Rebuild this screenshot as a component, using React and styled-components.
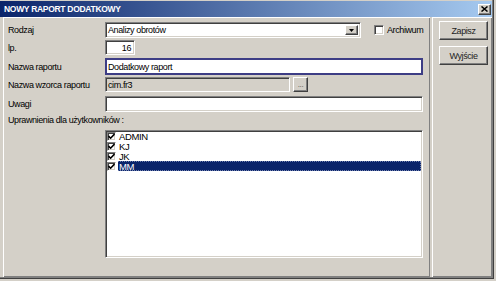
import React from "react";
import styled, { createGlobalStyle } from "styled-components";

const GlobalStyle = createGlobalStyle`
  body {
    margin: 0;
    background: #d4d0c8;
    font-family: "Liberation Sans", Arial, sans-serif;
    font-size: 9px;
    letter-spacing: -0.4px;
    color: #000;
  }
`;

const Window = styled.div`
  width: 494px;
  height: 279px;
  box-sizing: border-box;
  display: flex;
  flex-direction: column;
  background: #d4d0c8;
  border-right: 1px solid #404040;
  border-bottom: 1px solid #404040;
  box-shadow: inset -1px -1px #808080;
  padding: 1px 1px 1px 0;
`;

const TitleBar = styled.div`
  height: 16px;
  flex: none;
  display: flex;
  align-items: center;
  justify-content: space-between;
  padding: 0 1px 0 4px;
  background: linear-gradient(to right, #0a246a, #a6caf0);
`;

const Title = styled.span`
  color: #fff;
  font-weight: bold;
  font-size: 8.5px;
  letter-spacing: -0.3px;
`;

const CloseButton = styled.div`
  width: 13px;
  height: 11px;
  box-sizing: border-box;
  display: flex;
  align-items: center;
  justify-content: center;
  background: #d4d0c8;
  border: 1px solid;
  border-color: #fff #404040 #404040 #fff;
  box-shadow: inset -1px -1px #808080;
`;

const Body = styled.div`
  flex: 1;
  display: flex;
  gap: 2px;
  padding-left: 3px;
`;

const Panel = styled.div`
  box-sizing: border-box;
  box-shadow: inset 1px 1px #fff, inset -1px -1px #808080;
`;

const FormPanel = styled(Panel)`
  width: 427px;
  flex: none;
  padding: 5px 7px 0 5px;
  display: flex;
  flex-direction: column;
`;

const ButtonPanel = styled(Panel)`
  flex: 1;
  padding: 4px 4px 0 7px;
  display: flex;
  flex-direction: column;
  gap: 6px;
`;

const Row = styled.div`
  display: flex;
  align-items: stretch;
  height: ${(p) => p.$h}px;
  margin-top: ${(p) => p.$mt || 0}px;
`;

const Label = styled.span`
  width: 97px;
  flex: none;
  align-self: center;
  white-space: nowrap;
`;

const Box = styled.div`
  box-sizing: border-box;
  display: flex;
  align-items: center;
  justify-content: ${(p) => (p.$right ? "flex-end" : "flex-start")};
  width: ${(p) => (p.$w ? `${p.$w}px` : "auto")};
  flex: ${(p) => (p.$w ? "none" : "1")};
  padding: ${(p) => (p.$right ? "0 3px 0 0" : "0 0 0 2px")};
  background: ${(p) => (p.$disabled ? "#d4d0c8" : "#fff")};
  border: 1px solid;
  border-color: #808080 #fff #fff #808080;
  box-shadow: inset 1px 1px #404040, inset -1px -1px #d4d0c8;
  white-space: nowrap;
  overflow: hidden;
`;

const FocusedBox = styled(Box)`
  border: 2px solid #3d3d85;
  box-shadow: none;
  padding-left: 1px;
`;

const ComboBox = styled(Box)`
  padding: 2px 2px 2px 2px;
  justify-content: space-between;
`;

const DropButton = styled.div`
  width: 13px;
  height: 100%;
  box-sizing: border-box;
  display: flex;
  align-items: center;
  justify-content: center;
  background: #d4d0c8;
  border: 1px solid;
  border-color: #fff #404040 #404040 #fff;
  box-shadow: inset -1px -1px #808080;
`;

const CheckBox = styled.div`
  width: ${(p) => p.$size}px;
  height: ${(p) => p.$size}px;
  box-sizing: border-box;
  flex: none;
  display: flex;
  align-items: center;
  justify-content: center;
  background: #fff;
  border: 1px solid;
  border-color: #808080 #fff #fff #808080;
  box-shadow: inset 1px 1px #404040, inset -1px -1px #d4d0c8;
`;

const ArchiveWrap = styled.div`
  display: flex;
  align-items: center;
  gap: 3px;
  margin-left: 13px;
`;

const SmallButton = styled.div`
  width: 15px;
  margin-left: 3px;
  box-sizing: border-box;
  display: flex;
  align-items: flex-end;
  justify-content: center;
  padding-bottom: 2px;
  color: #555;
  font-size: 8px;
  background: #d4d0c8;
  border: 1px solid;
  border-color: #fff #404040 #404040 #fff;
  box-shadow: inset -1px -1px #808080;
`;

const SectionLabel = styled.span`
  align-self: center;
  white-space: nowrap;
`;

const ListBox = styled.div`
  flex: 1;
  box-sizing: border-box;
  background: #fff;
  border: 1px solid;
  border-color: #808080 #fff #fff #808080;
  box-shadow: inset 1px 1px #404040, inset -1px -1px #d4d0c8;
  padding: 0 1px 0 1px;
  display: flex;
  flex-direction: column;
`;

const ListItem = styled.div`
  height: 10px;
  display: flex;
  align-items: center;
  gap: 2px;
`;

const ItemText = styled.span`
  flex: 1;
  height: 100%;
  box-sizing: border-box;
  display: flex;
  align-items: center;
  padding-left: 1px;
  font-size: 9.5px;
  color: ${(p) => (p.$selected ? "#fff" : "#000")};
  background: ${(p) => (p.$selected ? "#0a246a" : "transparent")};
  border: 1px dotted ${(p) => (p.$selected ? "#6f7fae" : "transparent")};
  border-left: none;
`;

const Button = styled.div`
  height: 19px;
  width: 49px;
  box-sizing: border-box;
  display: flex;
  align-items: center;
  justify-content: center;
  color: #222;
  background: #d4d0c8;
  border: 1px solid;
  border-color: #fff #404040 #404040 #fff;
  box-shadow: inset -1px -1px #808080;
`;

const Check = () => (
  <svg width="7" height="7" viewBox="0 0 7 7">
    <path d="M0.5 3 L2.6 5.2 L6.5 1" fill="none" stroke="#000" strokeWidth="1.6" />
  </svg>
);

const users = ["ADMIN", "KJ", "JK", "MM"];

export default function App() {
  return (
    <>
      <GlobalStyle />
      <Window>
        <TitleBar>
          <Title>NOWY RAPORT DODATKOWY</Title>
          <CloseButton>
            <svg width="7" height="6" viewBox="0 0 7 6">
              <path d="M0.5 0.5 L6.5 5.5 M6.5 0.5 L0.5 5.5" stroke="#000" strokeWidth="1.5" />
            </svg>
          </CloseButton>
        </TitleBar>
        <Body>
          <FormPanel>
            <Row $h={16}>
              <Label>Rodzaj</Label>
              <ComboBox $w={256}>
                <span>Analizy obrotów</span>
                <DropButton>
                  <svg width="5" height="3" viewBox="0 0 5 3">
                    <path d="M0 0 H5 L2.5 3 Z" fill="#000" />
                  </svg>
                </DropButton>
              </ComboBox>
              <ArchiveWrap>
                <CheckBox $size={10} />
                <span>Archiwum</span>
              </ArchiveWrap>
            </Row>
            <Row $h={15} $mt={2}>
              <Label>lp.</Label>
              <Box $w={30} $right>
                16
              </Box>
            </Row>
            <Row $h={17} $mt={3}>
              <Label>Nazwa raportu</Label>
              <FocusedBox>Dodatkowy raport</FocusedBox>
            </Row>
            <Row $h={15} $mt={2}>
              <Label>Nazwa wzorca raportu</Label>
              <Box $w={185} $disabled>
                cim.fr3
              </Box>
              <SmallButton>...</SmallButton>
            </Row>
            <Row $h={16} $mt={4}>
              <Label>Uwagi</Label>
              <Box />
            </Row>
            <Row $h={12} $mt={2}>
              <SectionLabel>Uprawnienia dla użytkowników :</SectionLabel>
            </Row>
            <Row $h={128} $mt={4}>
              <Label />
              <ListBox>
                {users.map((u, i) => (
                  <ListItem key={u}>
                    <CheckBox $size={9}>
                      <Check />
                    </CheckBox>
                    <ItemText $selected={i === users.length - 1}>{u}</ItemText>
                  </ListItem>
                ))}
              </ListBox>
            </Row>
          </FormPanel>
          <ButtonPanel>
            <Button>Zapisz</Button>
            <Button>Wyjście</Button>
          </ButtonPanel>
        </Body>
      </Window>
    </>
  );
}
